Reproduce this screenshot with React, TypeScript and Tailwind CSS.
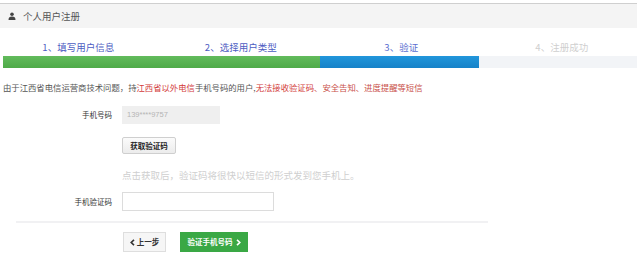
import React from "react";

const font = "font-['Noto_Sans_CJK_SC','Microsoft_YaHei',sans-serif]";

function UserIcon() {
  return (
    <svg width="8" height="8" viewBox="0 0 16 16" className="shrink-0">
      <circle cx="8" cy="4.5" r="3.6" fill="#444" />
      <path d="M1 16 C1 10.5 3.5 9 8 9 C12.5 9 15 10.5 15 16 Z" fill="#444" />
    </svg>
  );
}

function Chevron({ dir, color }: { dir: "l" | "r"; color: string }) {
  return (
    <svg width="5" height="7" viewBox="0 0 5 7" className="shrink-0">
      {dir === "l" ? (
        <path d="M4 0.8 L1.2 3.5 L4 6.2" stroke={color} strokeWidth="1.6" fill="none" />
      ) : (
        <path d="M1 0.8 L3.8 3.5 L1 6.2" stroke={color} strokeWidth="1.6" fill="none" />
      )}
    </svg>
  );
}

export default function App() {
  return (
    <div className={`w-[640px] h-[258px] bg-white overflow-hidden ${font}`}>
      <div className="w-[637px]">
        {/* header */}
        <div className="mt-[3px] h-[25px] border-t border-[#cfcfcf] bg-[#f4f4f4] flex items-center pl-[8px] gap-[7px]">
          <UserIcon />
          <span className="text-[9.5px] leading-[12px] text-[#555]">个人用户注册</span>
        </div>

        {/* steps */}
        <div className="ml-[3px] w-[634px]">
          <div className="grid grid-cols-4 h-[28px] items-end pb-[3px] text-[9.5px] leading-[12px]">
            <div className="text-center text-[#4d5cc2] pr-[8px]">1、填写用户信息</div>
            <div className="text-center text-[#4d5cc2]">2、选择用户类型</div>
            <div className="text-center text-[#5c6fd0] pl-[4px]">3、验证</div>
            <div className="text-center text-[#cfcfcf] pl-[8px]">4、注册成功</div>
          </div>
          <div className="grid grid-cols-4 h-[12px]">
            <div className="col-span-2 bg-gradient-to-b from-[#62bb5c] to-[#4eaa48]" />
            <div className="bg-gradient-to-b from-[#2196db] to-[#1682c8]" />
            <div className="bg-[#f2f4f7]" />
          </div>
        </div>

        {/* notice */}
        <div className="mt-[13px] pl-[3px] text-[8.35px] leading-[12px] text-[#555] whitespace-nowrap">
          由于江西省电信运营商技术问题，持<span className="text-[#d23a3a]">江西省以外电信</span>手机号码的用户,
          <span className="text-[#d23a3a]">无法接收验证码</span>
          <span className="text-[#c9504a]">、安全告知、进度提醒等短信</span>
        </div>

        {/* phone row */}
        <div className="mt-[13px] flex items-center gap-[10px]">
          <div className="w-[112px] text-right text-[7.5px] leading-[10px] text-[#333]">手机号码</div>
          <div className="w-[98px] h-[18px] bg-[#efefef] flex items-center pl-[5px] text-[7.5px] text-[#b5b5b5] font-['Liberation_Sans',sans-serif]">
            139****9757
          </div>
        </div>

        {/* get code button */}
        <div className="mt-[13px] flex">
          <div className="ml-[122px] w-[54px] h-[17px] border border-[#cfcfcf] rounded-[2px] bg-gradient-to-b from-[#fbfbfb] to-[#ececec] flex items-center justify-center text-[7.5px] font-bold text-[#222]">
            获取验证码
          </div>
        </div>

        {/* hint */}
        <div className="mt-[15px] ml-[122px] text-[9.5px] leading-[12px] text-[#cfcfcf] whitespace-nowrap">
          点击获取后，验证码将很快以短信的形式发到您手机上。
        </div>

        {/* code row */}
        <div className="mt-[11px] flex items-center gap-[10px]">
          <div className="w-[112px] text-right text-[7.5px] leading-[10px] text-[#333]">手机验证码</div>
          <div className="w-[152px] h-[19px] bg-white border border-[#dcdcdc]" />
        </div>

        {/* separator */}
        <div className="mt-[10px] ml-[16px] w-[472px] h-[2px] bg-[#f1f1f3]" />

        {/* actions */}
        <div className="mt-[9px] flex gap-[14px] pl-[123px]">
          <div className="w-[43px] h-[20px] border border-[#dedede] bg-[#f6f6f6] flex items-center justify-center gap-[2px] text-[7.5px] font-bold text-[#333]">
            <Chevron dir="l" color="#333" />
            <span>上一步</span>
          </div>
          <div className="w-[68px] h-[20px] bg-[#3aa845] flex items-center justify-center gap-[3px] text-[7.5px] font-bold text-white">
            <span>验证手机号码</span>
            <Chevron dir="r" color="#fff" />
          </div>
        </div>
      </div>
    </div>
  );
}
